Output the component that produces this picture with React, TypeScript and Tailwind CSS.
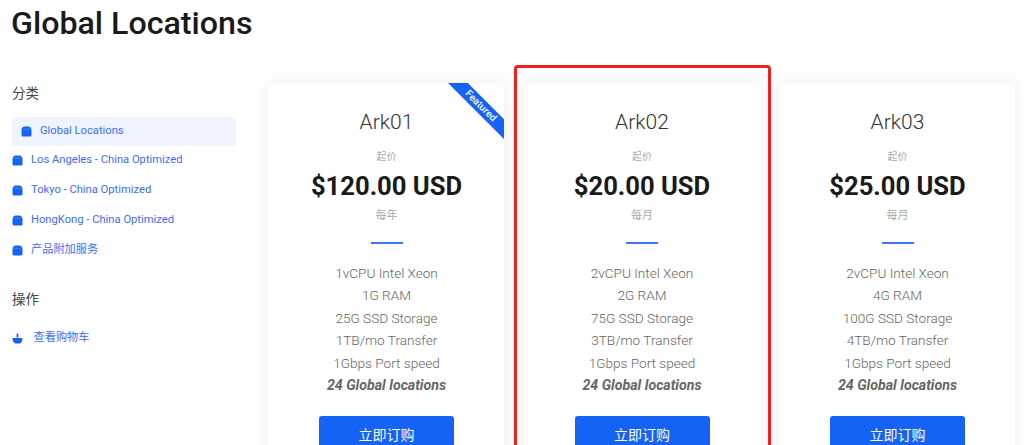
import React from "react";
const Bag = () => (<svg width="11" height="11" viewBox="0 0 11 11" className="shrink-0"><path d="M0.5 4.5C0.5 2 2 0.5 3.5 0.5h4C9 0.5 10.5 2 10.5 4.5V9a1.5 1.5 0 0 1-1.5 1.5H2A1.5 1.5 0 0 1 0.5 9z" fill="#1463f5"/><path d="M2 3.2h7" stroke="#6f9ff8" strokeWidth="0.6"/></svg>);
const Basket = () => (<svg width="11" height="11" viewBox="0 0 11 11" className="shrink-0"><path d="M0.5 5h10C10.5 8 9 10.5 7 10.5H4C2 10.5 0.5 8 0.5 5z" fill="#1463f5"/><rect x="4.6" y="0.5" width="1.8" height="4" fill="#1463f5"/></svg>);
const plans = [
 {n:"Ark01",p:"$120.00 USD",t:"每年",f:["1vCPU Intel Xeon","1G RAM","25G SSD Storage","1TB/mo Transfer"],feat:true},
 {n:"Ark02",p:"$20.00 USD",t:"每月",f:["2vCPU Intel Xeon","2G RAM","75G SSD Storage","3TB/mo Transfer"]},
 {n:"Ark03",p:"$25.00 USD",t:"每月",f:["2vCPU Intel Xeon","4G RAM","100G SSD Storage","4TB/mo Transfer"]},
];
const cats=["Los Angeles - China Optimized","Tokyo - China Optimized","HongKong - China Optimized","产品附加服务"];
export default function App(){return(
<div className="relative h-[445px] w-[1024px] overflow-hidden bg-white font-['Roboto','Noto_Sans_CJK_SC',sans-serif] text-[#1a1a1a]">
 <h1 className="pl-[11px] text-[32.2px] leading-[46px] font-medium h-[46px]">Global Locations</h1>
 <div className="flex pl-3 pt-[37px]">
  <aside className="w-[224px] shrink-0">
   <div className="text-[13.5px] leading-[20px] text-[#444]">分类</div>
   <div className="mt-[13.5px] flex h-[29px] items-center gap-[8px] rounded-[4px] bg-[#eff4fe] pl-[9px] text-[11.2px] text-[#3f6cf5]"><Bag/>Global Locations</div>
   {cats.map(c=><div key={c} className="flex h-[30px] items-center gap-[8px] text-[11.2px] text-[#3f6cf5]"><Bag/>{c}</div>)}
   <div className="mt-[23.5px] text-[13.5px] leading-[20px] text-[#444]">操作</div>
   <div className="mt-[14px] flex h-[30px] items-center gap-[10.5px] text-[11.2px] text-[#3f6cf5]"><Basket/>查看购物车</div>
  </aside>
  <main className="ml-[32px] flex gap-[19.5px]">
   {plans.map((p)=>(
    <div key={p.n} className="relative w-[236px] h-[400px] shrink-0 overflow-hidden rounded-[5px] bg-white pl-[1px] text-center shadow-[0_0_20px_rgba(0,0,0,0.07)] pt-[26px]">
     {p.feat&&<div className="absolute right-[-27px] top-[16px] w-[100px] rotate-45 bg-[#1463f5] text-white text-[10px] font-medium leading-[13.5px]">Featured</div>}
     <div className="text-[21px] font-light leading-[26px] text-[#333]">{p.n}</div>
     <div className="mt-[15px] text-[10px] leading-[14px] text-[#aaa]">起价</div>
     <div className="mt-[4px] text-[25.6px] font-bold leading-[36px]">{p.p}</div>
     <div className="mt-[5px] text-[11px] leading-[14px] text-[#aaa]">{p.t}</div>
     <div className="mx-auto mt-[19px] h-[1.5px] w-[32px] bg-[#3a78ee]"></div>
     <div className="mt-[18px] text-[13.6px] font-light leading-[22.5px] text-[#666]">
      {p.f.map(x=><div key={x}>{x}</div>)}
      <div>1Gbps Port speed</div>
      <div className="font-bold italic text-[14.2px] text-[#666]">24 Global locations</div>
     </div>
     <div className="mx-auto mt-[19px] flex h-[40px] w-[135px] items-center justify-center rounded-[3px] bg-[#1463f5] text-[14px] text-white">立即订购</div>
    </div>
   ))}
  </main>
 </div>
 <div className="pointer-events-none absolute left-[514px] top-[65px] h-[400px] w-[257px] rounded-[4px] border-[3px] border-[#f2201a]"></div>
</div>)}
